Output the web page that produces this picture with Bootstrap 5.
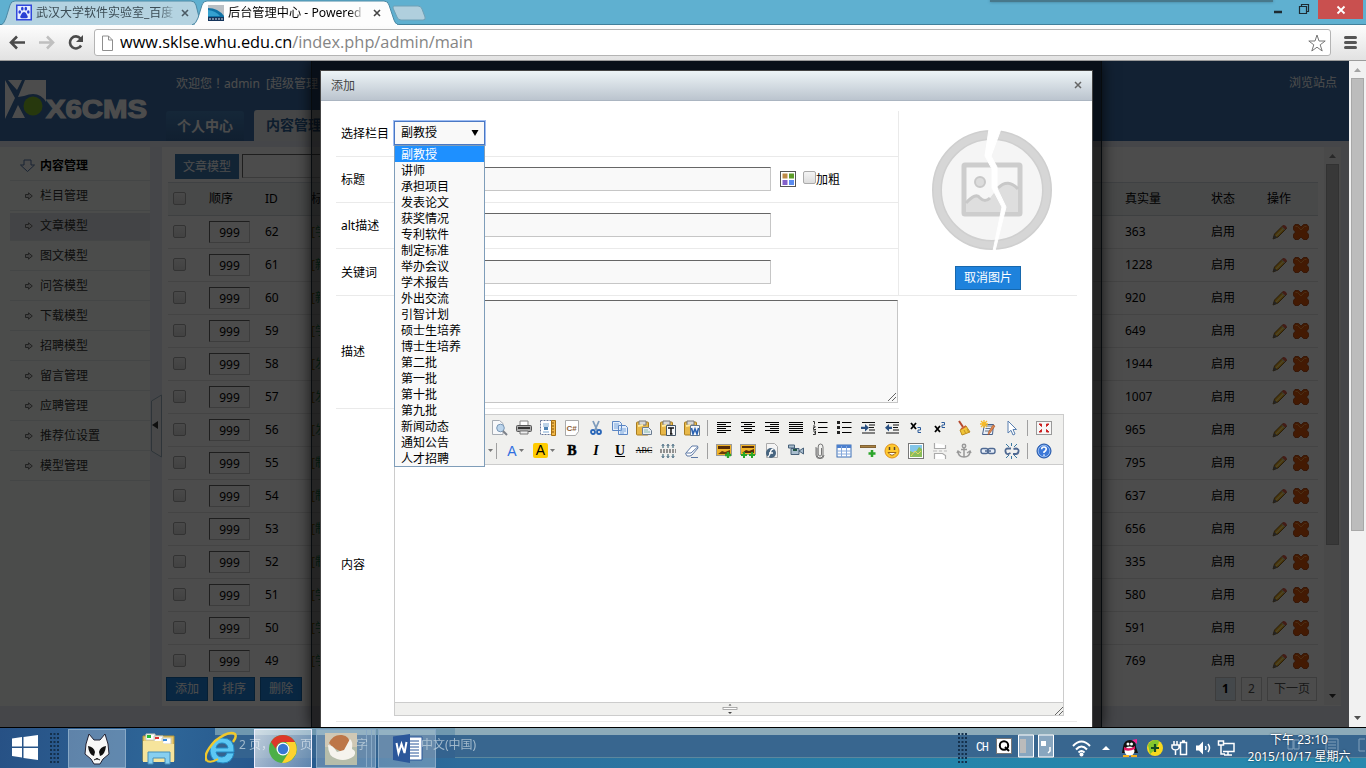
<!DOCTYPE html>
<html lang="zh-CN">
<head>
<meta charset="utf-8">
<title>后台管理中心 - Powered by X6CMS</title>
<link href="https://cdn.jsdelivr.net/npm/bootstrap@5.3.0/dist/css/bootstrap.min.css" rel="stylesheet">
<style>
html,body{width:1366px;height:768px;overflow:hidden}
body{font:12px/16px "Noto Sans","Noto Sans CJK SC",sans-serif;color:#000;background:#fff}
svg{display:block;flex:none}
/* browser chrome */
.tabstrip{height:25px;background:#5fb0d0;border-bottom:1px solid #41809b;position:relative}
.tabstrip>svg{position:absolute;left:0;top:0}
.tabtext{height:25px;font-size:12px}
.tabtext span{overflow:hidden;white-space:nowrap;line-height:26px}
.fade-end{-webkit-mask-image:linear-gradient(90deg,#000 88%,transparent)}
.winshadow{left:990px;top:0;width:283px;height:2px;background:#47788b;box-shadow:0 0 3px #3c7289}
.closebox{width:45px;height:19px;background:#c9504f;margin-right:3px}
.addressbar{height:36px;background:linear-gradient(#fdfdfd,#e2e2e2);border-bottom:1px solid #9b9b9b}
.omnibox{width:1237px;height:27px;background:#fff;border:1px solid #b4b4b4;border-radius:3px;margin-top:4px}
.url{font:16px/24px "Open Sans","Noto Sans",sans-serif;white-space:nowrap}
/* page */
.viewport{height:666px;overflow:hidden;position:relative}
.page{width:1349px;background:#e6ecf3}
.scrollcol{width:17px;background:#f1f1f1}
.thumb{width:13px;background:#bcbcbc;border:1px solid #a8a8a8}
.tophead{height:80px;background:#3c70aa;color:#fff}
.navtab{height:30px;width:78px;background:linear-gradient(#4783bd,#3768a0);border-radius:3px 3px 0 0;font:bold 14px/28px "Noto Sans CJK SC",sans-serif}
.navtab.on{height:31px;background:#e9edf1;color:#2c6296;width:80px}
.sidebar{width:150px;height:559px;background:#fafffa;padding-left:10px}
.sidebar div{height:30px;border-bottom:1px solid #e4eaea;padding-left:10px;color:#333}
.sidebar .sel{background:linear-gradient(#fafffa 2px,#e2e4ea 2px)}
.mainpane{width:1179px;height:559px;background:#fff}
.blue{background:#1e82dc;border:1px solid #1768ad;color:#fff;height:24px;line-height:22px;width:42px;text-align:center}
.modelbtn{width:64px;height:25px;line-height:23px;background:#3d78b0;border-color:#3d78b0}
.tinput{border:1px solid;border-color:#666 #c6c6c6 #c6c6c6 #666;background:#f9f9f9}
.g-row{height:33px;border-bottom:1px solid #e5e5e5;width:1150px;margin-left:6px}
.g-row>*{flex:none}
.g-head{height:34px;background:#f0f4f6;border-top:1px solid #d4dbe0;border-bottom:1px solid #d0d5da}
.g-check{width:36px;padding-left:5px}
.g-check .cbx{margin-top:-2px}
.g-ord{width:56px;padding-left:5px}
.g-id{width:51px;padding-left:5px}
.g-title{width:814px;color:#2a6}
.g-real{width:86px}.g-stat{width:56px}
.numbox{width:41px;height:22px;border:1px solid;border-color:#666 #ccc #ccc #666;text-align:center;line-height:21px}
.cbx{width:13px;height:13px;border:1px solid #aaa;border-radius:2px;background:linear-gradient(#f4f4f4,#ddd);flex:none}
.pg{height:24px;border:1px solid #ccc;line-height:22px;text-align:center;color:#555}
.shade{inset:0 17px 0 0;background:rgba(0,0,0,.7)}
.frame{left:311px;top:0;width:791px;height:667px;background:rgba(0,0,0,.52);border:1px solid #070b0e;border-top:0;box-shadow:0 0 14px rgba(0,0,0,.75);padding:9px 8px 0 8px}
.dlg{width:773px;height:660px;background:#fff;border:1px solid #444;border-bottom:0}
.dlg-title{height:30px;background:linear-gradient(#edf4f7,#bbc4ce);border-bottom:1px solid #abb5c1;color:#444;padding:0 10px}
.f-row{border-bottom:1px solid #eaeaea}
.f-lab{width:58px;padding-left:5px;flex:none}
.f-left{width:563px;border-right:1px solid #eaeaea}
.f-left .tinput{margin-top:-2px}
.pick{width:91px;height:24px;border:1px solid #4a78c4;box-shadow:0 0 0 1px #9fbdf3;background:#f9f9f9;padding:0 5px 0 6px}
.options{left:394px;top:84px;width:91px;height:322px;border:1px solid #7f9db9;background:#f9f9f9}
.options div{height:16px;line-height:17px;padding-left:6px;white-space:nowrap}
.options div:first-child{background:#1e90ff;color:#fff}
.editor{width:670px;height:302px;border:1px solid #ccc}
.ebar{height:50px;background:#f0f0ee;border-bottom:1px solid #ccc;padding:1px 0 0 93px}
.ebar .d-flex{height:23px}
.ico{width:24px;display:flex;justify-content:center}
.sep{width:1px;height:16px;margin:0 4px 0 3px;background:#a0a0a0}
.efoot{height:13px;background:#f0f0ee;border-top:1px solid #ccc}
/* taskbar */
.taskbar{height:41px;border-top:1px solid #000;position:relative;overflow:hidden;background:linear-gradient(100deg,#275185,#2e6698 12%,#26568b 20%,#2d6c9b 34%,#2584aa 70%,#2889ae)}
.ghostwin{left:215px;top:0;width:1151px;height:30px;background:linear-gradient(#8dabb9 7px,#38668f 7px);border-bottom:1px solid #5c879e}
.ghost1{background:linear-gradient(#6f98af 7px,#34638f 7px);width:240px;left:215px;top:0;height:30px}
.tb{height:39px;margin-top:1px;border:1px solid #88a9c6;background:rgba(255,255,255,.25);width:58px}
.tb.on{border:1px solid #eef;background:linear-gradient(120deg,rgba(255,255,255,.68),rgba(230,240,255,.28))}
.gh{color:#c5d5df;opacity:.75;font-size:12px;top:9px}
.clock{font-size:12px;line-height:17px;color:#fff;text-shadow:0 0 2px #123;text-align:center;white-space:nowrap}
</style>
</head>
<body class="d-flex flex-column">
<svg width="0" height="0" style="position:absolute">
<symbol id="pencil" viewBox="0 0 16 16"><path d="M1 15l1.500-5L11 1.500l3.500 3L6 13z" fill="#f2b01e" stroke="#7b5a20" stroke-width=".9"/><path d="M4 12l8-8" stroke="#ffe682" stroke-width="1.300"/><path d="M1 15l1.200-4 3 2.500z" fill="#777"/><path d="M10 2.500l1.500-1.500q2-.5 3.500 2.500l-1.500 2z" fill="#e2604e"/><path d="M9.500 3l3.500 3" stroke="#bbb"/></symbol>
<symbol id="cross" viewBox="0 0 16 16"><path d="M2 .5h3.500L8 3 10.500.5H14L15.700 3v2.500L13.500 8l2.200 2.500V13L14 15.500h-3.500L8 13l-2.500 2.500H2L.3 13v-2.500L2.500 8 .3 5.500V3z" fill="#e2590c" stroke="#a83a00" stroke-width=".8"/><path d="M2.500 2.500h2L8 6l3.500-3.500h2" stroke="#f89a48" fill="none"/></symbol>
<symbol id="arr" viewBox="0 0 8 8"><path d="M.5 2.500h3V.8L7.300 4 3.500 7.200V5.500h-3z" fill="#ddd" stroke="#666" stroke-width=".9"/></symbol>
<symbol id="e-preview" viewBox="0 0 16 16"><path d="M.5.5h7l3.500 3v11H.5z" fill="#f7f8fa" stroke="#a6acb4"/><circle cx="8.500" cy="8" r="3.800" fill="#bcd5ec" stroke="#7896b4"/><path d="M11 11l4 4" stroke="#7c8189" stroke-width="2"/></symbol>
<symbol id="e-print" viewBox="0 0 16 16"><path d="M4 1h8v5H4z" fill="#fff" stroke="#888"/><rect x=".5" y="5.500" width="15" height="6" rx="1" fill="#aaa" stroke="#555"/><path d="M2 8h12" stroke="#333" stroke-width="2"/><path d="M4 11h8v3H4z" fill="#eee" stroke="#777"/></symbol>
<symbol id="e-tpl" viewBox="0 0 16 16"><path d="M.5.5h11v14H.5z" fill="#fff" stroke="#679" stroke-dasharray="2 1"/><path d="M3 4h6M3 6h6M3 12h6" stroke="#7aa6d0"/><path d="M4 7h4v3H4z" fill="#4e83b5"/><path d="M11.500 .5h4v15h-4z" fill="#f0b849" stroke="#a87010"/><path d="M12 3h2M12 6h2M12 9h2M12 12h2" stroke="#85500c"/></symbol>
<symbol id="e-code" viewBox="0 0 16 16"><path d="M1.500.5h13v11l-3 4h-10z" fill="#fff" stroke="#aaa"/><text x="2.500" y="10.500" font-size="8" font-weight="bold" font-family="Liberation Sans" fill="#8b5b35">C#</text></symbol>
<symbol id="e-cut" viewBox="0 0 16 16"><path d="M5 1l4 9M11 1L7 10" stroke="#7e9cbc" stroke-width="1.800"/><circle cx="5" cy="12" r="2" fill="none" stroke="#2966b8" stroke-width="1.800"/><circle cx="11" cy="12" r="2" fill="none" stroke="#2966b8" stroke-width="1.800"/></symbol>
<symbol id="e-copy" viewBox="0 0 16 16"><path d="M.5 1.500h7l2 2v7h-9zM6.500 5.500h7l2 2v7h-9z" fill="#e4eefb" stroke="#5b86c4"/><path d="M2 4h5M2 6h4M2 8h4M8 9h6M8 11h6M8 13h4" stroke="#7ba6dc"/></symbol>
<symbol id="e-clip" viewBox="0 0 16 16"><rect x=".5" y="2" width="12" height="13" rx="1" fill="#e8b849" stroke="#a87c1e"/><path d="M3 1h7v4H3z" fill="#d8d8d8" stroke="#777"/><path d="M2 6l5-1" stroke="#ffeaa0" stroke-width="2"/></symbol>
<symbol id="e-paste" viewBox="0 0 16 16"><use href="#e-clip"/><path d="M6.500 7.500h6l3 3v4h-9z" fill="#e7edf4" stroke="#6b7c90"/><path d="M8 10h4M8 12h6" stroke="#8ba"/></symbol>
<symbol id="e-pastet" viewBox="0 0 16 16"><use href="#e-clip"/><path d="M6.500 5.500h9v10h-9z" fill="#f4f7fa" stroke="#456"/><path d="M8 8h6M11 8v6M10 14h2.500" stroke="#111" stroke-width="1.500"/></symbol>
<symbol id="e-pastew" viewBox="0 0 16 16"><use href="#e-clip"/><path d="M6.500 5.500h9v10h-9z" fill="#f4f7fa" stroke="#678"/><path d="M7.500 8l1.500 6 2-5 2 5L14.500 8" stroke="#2a62b2" stroke-width="1.600" fill="none"/></symbol>
<symbol id="e-left" viewBox="0 0 16 16"><path d="M1 2.500h14M1 4.500h9M1 6.500h14M1 8.500h9M1 10.500h14M1 12.500h9" stroke="#000"/></symbol>
<symbol id="e-center" viewBox="0 0 16 16"><path d="M1 2.500h14M4 4.500h8M1 6.500h14M4 8.500h8M1 10.500h14M4 12.500h8" stroke="#000"/></symbol>
<symbol id="e-right" viewBox="0 0 16 16"><path d="M1 2.500h14M6 4.500h9M1 6.500h14M6 8.500h9M1 10.500h14M6 12.500h9" stroke="#000"/></symbol>
<symbol id="e-full" viewBox="0 0 16 16"><path d="M1 2.500h14M1 4.500h14M1 6.500h14M1 8.500h14M1 10.500h14M1 12.500h14" stroke="#000"/></symbol>
<symbol id="e-ol" viewBox="0 0 16 16"><path d="M6 2.500h9.500M6 7.500h9.500M6 12.500h9.500" stroke="#000"/><path d="M1 1.500h1.500v3M1 6h2v1.500H1.500v2h2.500M1 11h2.500v3.500H1M2 12.800h1.500" fill="none" stroke="#333"/></symbol>
<symbol id="e-ul" viewBox="0 0 16 16"><path d="M6 2.500h9.500M6 7.500h9.500M6 12.500h9.500" stroke="#000"/><path d="M1 1h3v3H1zM1 6h3v3H1zM1 11h3v3H1z" fill="#222"/></symbol>
<symbol id="e-ind" viewBox="0 0 16 16"><path d="M2 2.500h13M9 5h6M9 7.500h5M9 10h6M2 13h13" stroke="#111" stroke-width="1.200"/><path d="M1 6.700h4V4l4 3.700-4 3.800V9H1z" fill="#2a5081"/></symbol>
<symbol id="e-out" viewBox="0 0 16 16"><path d="M2 2.500h13M9 5h6M9 7.500h5M9 10h6M2 13h13" stroke="#111" stroke-width="1.200"/><path d="M8 6.700H5V4L1 7.700l4 3.800V9h3z" fill="#2a5081"/></symbol>
<symbol id="e-sub" viewBox="0 0 16 16"><path d="M3 3l5 6M8 3l-5 6" stroke="#000" stroke-width="1.800"/><path d="M9.500 7.500h3v2.500h-2.500v2.500h3" fill="none" stroke="#2a5a9a"/></symbol>
<symbol id="e-sup" viewBox="0 0 16 16"><path d="M3 6l5 6M8 6l-5 6" stroke="#000" stroke-width="1.800"/><path d="M9.500 2.500h3V5h-2.500v2.500h3" fill="none" stroke="#2a5a9a"/></symbol>
<symbol id="e-broom" viewBox="0 0 16 16"><path d="M3 1l4 6" stroke="#b5482e" stroke-width="2"/><path d="M4 10l6-4 4 6-8 3z" fill="#f0c538" stroke="#bd8b1d"/><path d="M5 9l5-3" stroke="#c63" stroke-width="1.500"/><path d="M8 10l2 4M11 9l1.500 3" stroke="#c59428"/></symbol>
<symbol id="e-wand" viewBox="0 0 16 16"><path d="M4.500 4.500h9l-1 10h-10z" fill="#e8eff8" stroke="#47618a"/><path d="M6 6h6M5.500 8.500h5M5 11h5" stroke="#678"/><path d="M4 0v8M0 4h8M1 1l6 6M7 1L1 7" stroke="#f5ba28" stroke-width="1.300"/><path d="M15 6l-5 7-2 2 .5-3L13 5z" fill="#e2894c" stroke="#a34e25" stroke-width=".6"/></symbol>
<symbol id="e-select" viewBox="0 0 16 16"><path d="M4 1l8.500 8.500H9l2 4.500-2 1-2-4.700L4 13z" fill="#fff" stroke="#587fb0"/></symbol>
<symbol id="e-fs" viewBox="0 0 16 16"><rect x=".5" y="1.500" width="15" height="13" fill="#f7f7f7" stroke="#999"/><path d="M3 4h2.500v2.500zM13 4h-2.500v2.500zM3 12h2.500V9.500zM13 12h-2.500V9.500z" fill="#c22" stroke="#c22"/></symbol>
<symbol id="e-lh" viewBox="0 0 16 16"><path d="M0 7h16M0 9h16" stroke="#333" stroke-dasharray="2 1"/><path d="M3 5V1M8 5V1M13 5V1M3 11v4M8 11v4M13 11v4" stroke="#256"/><path d="M1.500 3L3 1.500 4.500 3M6.500 3L8 1.500 9.500 3M11.500 3L13 1.500 14.500 3M1.500 13L3 14.500 4.500 13M6.500 13L8 14.500 9.500 13M11.500 13l1.500 1.500 1.500-1.500" fill="none" stroke="#357" stroke-width=".7"/></symbol>
<symbol id="e-eraser" viewBox="0 0 16 16"><path d="M1.500 10.500L8 3h5.500l.5 2-6 7-2 1h-3z" fill="#fff" stroke="#5d79a5"/><path d="M2 10h5l6.500-6M7 14.500h7" stroke="#5d79a5" fill="none"/></symbol>
<symbol id="e-img" viewBox="0 0 16 16"><rect x=".5" y="1.500" width="15" height="11" fill="#f0b328" stroke="#999"/><path d="M2 3h12v3H2z" fill="#542c08"/><path d="M2 11l4-3 3 1 5-2v4z" fill="#693b09"/><path d="M12 9v6M9 12h6" stroke="#29a628" stroke-width="2.300"/></symbol>
<symbol id="e-imgs" viewBox="0 0 16 16"><rect x=".5" y="1.500" width="15" height="10" fill="#f0b328" stroke="#999"/><path d="M2 3h12v2H2zM2 10l4-3 3 1 5-2v4z" fill="#542c08"/><path d="M4 9v6M1 12h6M12 9v6M9 12h6" stroke="#29a628" stroke-width="2"/></symbol>
<symbol id="e-flash" viewBox="0 0 16 16"><path d="M2.500.5h8l3 3v11h-11z" fill="#f4f4f4" stroke="#aaa"/><circle cx="7" cy="10" r="5" fill="#476580"/><path d="M9.500 6Q7 6 6.500 9T4 14M5 10h4" stroke="#fff" fill="none" stroke-width="1.300"/></symbol>
<symbol id="e-video" viewBox="0 0 16 16"><path d="M.5 2h6v3h-6zM3 5.500h8v6H3zM11 8l4.500-3v6z" fill="#a9bdce" stroke="#476078"/><path d="M5 7h4" stroke="#254" stroke-width="2"/></symbol>
<symbol id="e-attach" viewBox="0 0 16 16"><path d="M5 5v7q0 3 3 3t3-3V4q0-3-2.500-3T6.200 4v7q0 2 1.800 2t1.500-2V5M4 4v8q0 3.700 4 3.700t4-3.700" fill="none" stroke="#777"/></symbol>
<symbol id="e-table" viewBox="0 0 16 16"><rect x="1" y="2" width="14" height="12" fill="#fff" stroke="#3d6eb4"/><path d="M1 3.500h14" stroke="#4b7fce" stroke-width="3"/><path d="M1 8h14M1 11h14M5.500 3v11M10.500 3v11" stroke="#86a9dc"/></symbol>
<symbol id="e-hr" viewBox="0 0 16 16"><path d="M0 2.500h16v2H0z" fill="#a88142" stroke="#6f4c1c" stroke-width=".8"/><path d="M12 7v7M8.500 10.500h7" stroke="#2ca52b" stroke-width="2.500"/></symbol>
<symbol id="e-smile" viewBox="0 0 16 16"><circle cx="8" cy="8" r="7" fill="#ffc92e" stroke="#de901b"/><path d="M5.500 4v3M10.500 4v3" stroke="#543" stroke-width="1.500"/><path d="M4 9.500h8Q8 15 4 9.500" fill="#fff" stroke="#9b6417"/></symbol>
<symbol id="e-map" viewBox="0 0 16 16"><rect x=".5" y=".5" width="15" height="15" fill="#fff" stroke="#777"/><path d="M2 2h12v12H2z" fill="#84c6e9"/><path d="M2 8l5 2 4-6 3 2v8H2z" fill="#8abd5b"/><path d="M3 13l4-5 3 3 3-3" stroke="#e9d460" fill="none"/></symbol>
<symbol id="e-pb" viewBox="0 0 16 16"><path d="M2.500 0v5.500h11V2M2.500 16v-5.500h8l3 2V16" fill="#fff" stroke="#aaa" stroke-width="1.200"/><path d="M1 8h4m2 0h3m2 0h3" stroke="#bbb"/></symbol>
<symbol id="e-anchor" viewBox="0 0 16 16"><circle cx="8" cy="3" r="1.700" fill="none" stroke="#999" stroke-width="1.500"/><path d="M8 5v9M5 6.500h6M2 8q0 6 6 6t6-6M1 10l1-2 3 2M15 10l-1-2-3 2" fill="none" stroke="#999" stroke-width="1.500"/></symbol>
<symbol id="e-link" viewBox="0 0 16 16"><rect x="1" y="5.500" width="7" height="5" rx="2" fill="#e5edf8" stroke="#4f6992" stroke-width="1.400"/><rect x="8" y="5.500" width="7" height="5" rx="2" fill="#e5edf8" stroke="#4f6992" stroke-width="1.400"/><path d="M5 8h6" stroke="#4f6992" stroke-width="1.500"/></symbol>
<symbol id="e-unlink" viewBox="0 0 16 16"><path d="M7 5.500H4q-3 0-2.500 3t3 2.500l2-1M9.500 6L12 5.500q3 .5 2.500 3T12 11H9" fill="none" stroke="#4f6992" stroke-width="1.800"/><path d="M2 1l3 3M7.500 0v3M13 1l-3 3M2 15l3-3M7.500 16v-3M13 15l-3-3" stroke="#3a78a2"/></symbol>
<symbol id="e-help" viewBox="0 0 16 16"><circle cx="8" cy="8" r="7" fill="#3c78d8" stroke="#2153a4"/><circle cx="8" cy="8" r="5.800" fill="none" stroke="#a9c9f5" stroke-width=".8"/><path d="M5.700 6.200Q5.800 3.800 8.200 4q2.300.3 2 2.300Q10 7.700 8 9v1M8 11.500v1.200" stroke="#fff" stroke-width="1.600" fill="none"/></symbol>
</svg>

<!-- tab strip -->
<div class="tabstrip d-flex">
  <svg width="430" height="25"><path d="M1 25Q4 24 6 18L10 5q1-4 5-4h176q4 0 5 4l5 20" fill="#b4d3e1" stroke="#4b89a5"/><path d="M394 6h24q3 0 4 3l3 8q1 3-2 3h-22q-3 0-4-3l-4-9q0-2 1-2z" fill="#b0cfdd" stroke="#6fa0b6"/><path d="M192 25q4-1 6-7l4-13q1-4 5-4h177q4 0 5 4l5 15q1 4 5 5z" fill="#fdfdfd" stroke="#4b89a5"/><path d="M195 25h202" stroke="#fdfdfd" stroke-width="2"/></svg>
  <div class="tabtext d-flex position-relative w-100">
    <svg class="ms-3 mt-1" width="16" height="17" viewBox="0 0 16 17"><rect width="16" height="16" y=".5" fill="#3148dc"/><path d="M1.500 2h13v13h-13z" fill="#e7edff"/><g fill="#2a40d4"><ellipse cx="3.700" cy="8" rx="1.300" ry="1.800"/><ellipse cx="6.300" cy="4.700" rx="1.300" ry="1.900"/><ellipse cx="9.800" cy="4.700" rx="1.300" ry="1.900"/><ellipse cx="12.300" cy="8" rx="1.300" ry="1.800"/><path d="M8 8q2 0 3 3 2 3-1 3.300H6Q3 14 5 11q1-3 3-3"/></g></svg>
    <span class="fade-end" style="width:140px;margin-left:4px;color:#3c4d56">武汉大学软件实验室_百度</span>
    <svg style="margin:8px 0 0 4px" width="10" height="10"><path d="M2 2l6 6M8 2l-6 6" stroke="#4a5a64" stroke-width="1.600"/></svg>
    <svg style="margin:5px 4px 0 18px" width="16" height="16"><rect width="16" height="16" fill="#b9bfc4"/><path d="M0 3q10 0 16 8v2H0z" fill="#0f73a6"/><path d="M0 5q8 1 12 6L0 11z" fill="#35a1cf"/><path d="M0 12h16v4H0z" fill="#15345b"/><path d="M1 14h14" stroke="#d8e4ef" stroke-dasharray="2 1"/></svg>
    <span class="fade-end" style="width:137px;font-size:12.200px">后台管理中心 - Powered</span>
    <svg style="margin:8px 0 0 7px" width="10" height="10"><path d="M2 2l6 6M8 2l-6 6" stroke="#444" stroke-width="1.600"/></svg>
    <svg class="ms-auto" width="90" height="25"><path d="M46 12h8" stroke="#1d2b32" stroke-width="2.500"/><path d="M71.500 6.500h7v7h-7zM73.500 6V4.500h7v7H79" fill="none" stroke="#1d2b32" stroke-width="1.200"/></svg>
    <div class="closebox d-flex justify-content-center align-items-center"><svg width="10" height="10"><path d="M1.500 1.500l7 7M8.500 1.500l-7 7" stroke="#fff" stroke-width="1.800"/></svg></div>
  </div>
  <div class="winshadow position-absolute"></div>
</div>
<div class="addressbar d-flex">
  <svg width="94" height="35"><g fill="none" stroke-width="2.600"><path d="M25 17.500H12M17 11.500l-6 6 6 6" stroke="#4b4b4b"/><path d="M39 17.500h13M47 11.500l6 6-6 6" stroke="#bfbfbf"/><path d="M80.500 13.500a6 6 0 1 0 .6 7" stroke="#4b4b4b"/></g><path d="M83 10v7h-7z" fill="#4b4b4b"/></svg>
  <div class="omnibox d-flex align-items-center">
    <svg style="margin:0 7px" width="11" height="16"><path d="M.5 1h6l4 4v10.500H.5zM6.500 1v4h4" fill="#fff" stroke="#8e8e8e"/></svg>
    <svg width="356" height="26" class="url"><text x="0" y="18" textLength="353" lengthAdjust="spacingAndGlyphs">www.sklse.whu.edu.cn<tspan fill="#858585">/index.php/admin/main</tspan></text></svg>
    <svg class="ms-auto me-1" width="18" height="18" viewBox="0 0 18 18"><path d="M9 1l2 6h6.200l-5 3.800 2 6.200L9 13.200 3.800 17l2-6.200-5-3.800H7z" fill="#fff" stroke="#777"/></svg>
  </div>
  <svg width="35" height="35"><path d="M14.500 12.500h10M14.500 17.500h10M14.500 22.500h10" stroke="#555" stroke-width="3" stroke-linecap="round"/></svg>
</div>

<div class="viewport d-flex">
  <div class="page">
    <div class="tophead d-flex">
      <svg width="166" height="80"><g fill="#fff"><path d="M5 19l10 18L5 58zM8 19h14l-5 10zM12 57l6-13 7 13zM25 19h21v22Q39 29 24 35l-6 1z"/><text x="46" y="56.500" font-family="Liberation Sans" font-weight="bold" font-size="25.500" stroke="#fff" stroke-width="1.200" textLength="101" lengthAdjust="spacingAndGlyphs">X6CMS</text></g><circle cx="33" cy="45" r="9.500" fill="#84bd2e"/></svg>
      <div class="flex-grow-1 d-flex flex-column justify-content-between">
        <div class="d-flex justify-content-between" style="padding:14px 12px 0 10px"><span>欢迎您<span lang="zh-TW" style="font-family:'Noto Sans CJK TC',sans-serif">！</span>admin&nbsp; [超级管理</span><span>浏览站点</span></div>
        <div class="d-flex align-items-end" style="gap:10px"><div class="navtab text-center">个人中心</div><div class="navtab on text-center">内容管理</div></div>
      </div>
    </div>
    <div class="d-flex" style="padding-top:6px">
      <div class="sidebar" id="side"></div>
      <svg width="12" height="559"><path d="M11.500 248v62l-10-6v-50z" fill="#f0f2f4" stroke="#9bb0bf"/><path d="M8 274v8l-6-4z" fill="#333"/></svg>
      <div class="mainpane d-flex">
        <div>
          <div class="d-flex" style="height:35px;padding:7px 0 0 13px;gap:3px"><div class="blue modelbtn">文章模型</div><div class="tinput" style="width:300px;height:24px;background:#fff"></div></div>
          <div style="height:490px;overflow:hidden" id="grid">
            <div class="g-row g-head d-flex align-items-center"><div class="g-check"><div class="cbx"></div></div><div class="g-ord">顺序</div><div class="g-id">ID</div><div class="g-title" style="color:#222">标题</div><div class="g-real">真实量</div><div class="g-stat">状态</div><div>操作</div></div>
          </div>
          <div class="d-flex justify-content-between" style="padding:5px 7px 0 4px;width:1162px">
            <div class="d-flex" style="gap:5px"><div class="blue">添加</div><div class="blue">排序</div><div class="blue">删除</div></div>
            <div class="d-flex" style="gap:5px"><div class="pg fw-bold" style="width:21px;background:#e4f0fa;color:#000">1</div><div class="pg" style="width:21px">2</div><div class="pg" style="width:50px">下一页</div></div>
          </div>
        </div>
        <div class="d-flex flex-column align-items-center" style="width:17px;height:558px;background:#f4f4f4"><svg width="17" height="17"><path d="M5 11l3.500-4 3.500 4z" fill="#888"/></svg><div class="thumb" style="height:381px"></div><svg class="mt-auto" width="17" height="17"><path d="M5 6l3.500 4L12 6z" fill="#333"/></svg></div>
      </div>
    </div>
  </div>
  <div class="scrollcol d-flex flex-column align-items-center"><svg width="17" height="17"><path d="M5 11l3.500-4 3.500 4z" fill="#a3a3a3"/></svg><div class="thumb" style="height:453px"></div><svg class="mt-auto" width="17" height="17"><path d="M5 6l3.500 4L12 6z" fill="#505050"/></svg></div>
  <div class="shade position-absolute"></div>
  <div class="frame position-absolute">
    <div class="dlg">
      <div class="dlg-title d-flex justify-content-between align-items-center"><span>添加</span><svg width="8" height="8" style="margin-top:-2px"><path d="M1 1l6 6M7 1L1 7" stroke="#666" stroke-width="1.500"/></svg></div>
      <div style="padding:10px 15px 0">
        <div class="d-flex f-row" style="height:185px">
          <div class="f-left">
            <div class="f-row d-flex align-items-center" style="height:46px"><div class="f-lab">选择栏目</div><div class="pick d-flex align-items-center justify-content-between" style="margin-top:-1px"><span>副教授</span><svg width="8" height="8"><path d="M.5 1h7L4 7z"/></svg></div></div>
            <div class="f-row d-flex align-items-center" style="height:46px"><div class="f-lab">标题</div><div class="tinput" style="width:377px;height:24px"></div><svg style="margin:-2px 7px 0 9px" width="16" height="16"><rect x=".5" y=".5" width="15" height="15" fill="#fff" stroke="#555"/><path d="M2.500 2.500h5v5h-5z" fill="#be8a45"/><path d="M9 2.500h5v5H9z" fill="#5d9d28"/><path d="M2.500 9h5v5h-5z" fill="#8360ca"/><path d="M9 9h5v5H9z" fill="#5a8bf0"/></svg><div class="cbx" style="margin-top:-5px"></div><span>加粗</span></div>
            <div class="f-row d-flex align-items-center" style="height:46px"><div class="f-lab">alt描述</div><div class="tinput" style="width:377px;height:24px"></div></div>
            <div class="d-flex align-items-center" style="height:47px"><div class="f-lab">关键词</div><div class="tinput" style="width:377px;height:24px"></div></div>
          </div>
          <div class="flex-grow-1 d-flex flex-column align-items-center" style="padding:18px 0 0 0">
            <svg width="122" height="124" viewBox="0 0 122 124" style="margin-left:8px"><circle cx="61" cy="61" r="55" fill="#f5f5f5" stroke="#cfcfcf" stroke-width="10"/><circle cx="61" cy="61" r="55" fill="none" stroke="#d6d6d6" stroke-width="7"/><rect x="33" y="36" width="56" height="49" rx="1" fill="#f6f6f6" stroke="#cdcdcd" stroke-width="5"/><circle cx="49" cy="53" r="5" fill="#dcdcdc" stroke="#c8c8c8" stroke-width="2"/><path d="M35 75l10-9 6 5q4 4 8-2 6-8 11-12 9-7 17 3v23H35z" fill="#dedede"/><path d="M35 74q10-11 14-5 5 5 10 0M67 59q10-10 20 1" fill="none" stroke="#c8c8c8" stroke-width="3"/><path d="M58 0L54 27l7 13 0 19 10 19-9 44h2l11-44-9-19 0-21-6-11L70 0z" fill="#fff" stroke="#fff"/></svg>
            <div class="blue" style="width:66px;margin-top:13px">取消图片</div>
          </div>
        </div>
        <div class="f-row d-flex align-items-center" style="height:113px;width:563px"><div class="f-lab">描述</div><div class="tinput d-flex justify-content-end align-items-end" style="width:504px;height:103px;margin-top:-1px"><svg width="10" height="10"><path d="M1 9l8-8M5 9l4-4" stroke="#555" stroke-width=".9"/></svg></div></div>
        <div class="f-row d-flex align-items-center" style="height:313px"><div class="f-lab">内容</div>
          <div class="editor d-flex flex-column"><div class="ebar"><div class="d-flex align-items-center" id="bar1"></div><div class="d-flex align-items-center" id="bar2"></div></div><div class="flex-grow-1"></div>
            <div class="efoot d-flex"><svg class="mx-auto" style="padding-left:0;transform:translateX(5px)" width="16" height="12"><path d="M6.500 2.500L8 1l1.500 1.500zM6 9l2 2 2-2z" fill="#444"/><rect x="1" y="4.500" width="14" height="2" fill="#fff" stroke="#999" stroke-width=".8"/></svg><svg class="mt-auto" width="9" height="9"><path d="M1 9l8-8M5 9l4-4" stroke="#555" stroke-width=".9"/></svg></div>
          </div>
        </div>
      </div>
    </div>
  </div>
  <div class="options position-absolute" id="opts"></div>
</div>

<div class="taskbar d-flex flex-grow-1">
  <div class="ghostwin position-absolute"></div><div class="ghost1 position-absolute"></div>
  <span class="gh position-absolute" style="left:239px">2 页，</span><span class="gh position-absolute" style="left:300px">页</span>
  <div class="d-flex position-relative w-100">
    <svg width="68" height="40"><path d="M12 10.500l10-1.500v9.500H12zM23.500 9L38 7v11.500H23.500zM12 20h10v9.500L12 28zM23.500 20H38v12l-14.500-2z" fill="#fff"/><path d="M51 5v30M54.500 5v30M58 5v30" stroke="#14304c" stroke-width="2" stroke-dasharray="2 2"/></svg>
    <div class="tb d-flex justify-content-center align-items-center"><svg width="26" height="32"><path d="M5 1l5 6h6l5-6 3 10 1 10-6 5-3 5h-6l-3-5-6-5L2 11z" fill="#f7f7f7" stroke="#223"/><path d="M4 13q6 1 7 6l-1 4q-5-1-6-10zM22 13q-6 1-7 6l1 4q5-1 6-10z" fill="#111"/><path d="M10 27q3-3 6 0M13 25v2" stroke="#111" fill="none"/></svg></div>
    <svg style="margin:5px 0 0 16px" width="34" height="32"><path d="M1 3h31v25H1z" fill="#e7c96d" stroke="#b49539"/><path d="M4 1h9v6H4zM12 3h9v6h-9zM20 5h9v6h-9z" fill="#fff" stroke="#ccb"/><path d="M5 2h4v3H5z" fill="#2b3"/><path d="M13 4h4v2h-4z" fill="#d33"/><path d="M21 6h4v2h-4z" fill="#38d"/><path d="M1 8h19l2 3h10v18H1z" fill="#f6e49c"/><path d="M6 31V19h22v12h-5v-6H11v6z" fill="#87cff0" stroke="#478fb8"/></svg>
    <svg style="margin:3px 0 0 29px" width="34" height="34"><path d="M29 22h-7q-1 4-5 4-5 0-6-5h18q1-14-12-14Q5 8 5 20q1 12 13 12 9 0 11-10zM11 17q1-5 6-5t6 5z" fill="#5cc8f4" stroke="#238bc5"/><path d="M2 30Q-3 24 10 10 24-1 30 3q2 3-2 8" fill="none" stroke="#f0c82c" stroke-width="2.500"/><path d="M2 30q5 2 11-2" fill="none" stroke="#f0c82c" stroke-width="2"/></svg>
    <div class="tb on d-flex justify-content-center align-items-center" style="margin-left:15px"><svg width="28" height="28" viewBox="0 0 28 28"><circle cx="14" cy="14" r="14" fill="#4caf46"/><path d="M2 7Q6 0 14 0t12 7H14q-6 0-7 7z" fill="#dd3829"/><path d="M26 7q4 9-1 15-4 6-12 6l7-11q2-5-3-10z" fill="#fdd22f"/><circle cx="14" cy="14" r="6.500" fill="#fff"/><circle cx="14" cy="14" r="5.200" fill="#3778d3"/></svg></div>
    <div class="tb d-flex align-items-center" style="margin-left:4px;width:51px;padding-left:8px"><svg width="32" height="32"><path d="M0 0h32v32H0z" fill="#b6bdaa"/><path d="M0 0h32v14H0z" fill="#d0c8b4"/><path d="M4 10Q8 1 17 2q8 1 8 10l-4 8Q9 17 4 10" fill="#bd7648"/><path d="M3 12q5 0 9 7l7-2 6-11q3 2 2 10 5 2 2 7-8 6-17 3Q3 24 3 12" fill="#f5f3ed"/></svg></div>
    <div class="tb" style="width:5px;border-left:0"></div><div class="tb" style="width:4px;border-left:0"></div>
    <div class="tb d-flex justify-content-center align-items-center" style="margin-left:2px"><svg width="31" height="31"><path d="M14 4h16v23H14z" fill="#fff" stroke="#2b579a"/><path d="M18 8h9M18 11h9M18 14h9M18 17h9M18 20h9M18 23h9" stroke="#2b579a"/><path d="M1 3.500L18 1v29L1 27z" fill="#2b579a"/><path d="M4.500 10l2 10L9.500 11l3 9 2-11" fill="none" stroke="#fff" stroke-width="2"/></svg></div>
    <div class="ms-auto d-flex align-items-center" style="margin-right:12px;color:#fff">
      <svg width="14" height="36"><path d="M2 3v30M5.500 3v30M9 3v30" stroke="#14304c" stroke-width="2" stroke-dasharray="2 2"/></svg>
      <svg width="16" height="14" style="margin:-3px 0 0 4px"><text x="1" y="11" fill="#fff" font-family="Liberation Mono" font-size="12" textLength="13">CH</text></svg>
      <svg style="margin:-5px 0 0 5px" width="62" height="24"><rect x=".5" y="4.500" width="15" height="15" fill="#fff" stroke="#777"/><circle cx="8" cy="11.500" r="4.200" fill="none" stroke="#000" stroke-width="2"/><path d="M9 13l4 4" stroke="#000" stroke-width="2"/><path d="M22.500 1h15v22h-15zM42.500 1h15v22h-15z" fill="#88a6bf" stroke="#fff"/><path d="M24 5h6v14h-6z" fill="#bbb"/><path d="M45 7h5v5h-5z" fill="#fff"/><path d="M54 13v4l-2 2" stroke="#fff" stroke-width="1.500" fill="none"/></svg>
      <svg style="margin-left:13px" width="21" height="20"><g fill="none" stroke="#fff" stroke-width="2"><path d="M2 8q8.500-9 17 0M5 11.500q5.500-6 11 0M7.500 14.500q3-3 6 0"/></g><circle cx="10.500" cy="16.500" r="2" fill="#fff"/></svg>
      <svg style="margin-left:9px" width="10" height="8"><path d="M1 6l4-4 4 4z" fill="#fff"/></svg>
      <svg style="margin-left:10px" width="18" height="18"><path d="M2 8Q3 1 9 1t6 7l2 6H1z" fill="#111"/><ellipse cx="8.500" cy="12" rx="5" ry="4.500" fill="#fff"/><path d="M3 8q6 3 11-1v3q-6 3-11 1z" fill="#e21b65"/><path d="M11 1l5 4V0z" fill="#f52a8f"/><circle cx="7" cy="5" r="1.500" fill="#fff"/><circle cx="10.500" cy="5" r="1.500" fill="#fff"/><path d="M2 16h6v2H2zM10 16h6v2h-6z" fill="#f5b01c"/></svg>
      <svg style="margin-left:7px" width="18" height="18"><circle cx="9" cy="9" r="8" fill="#f7d91d"/><path d="M2 6q5-7 11-4 0 6-9 13z" fill="#84c72e"/><path d="M9 5v8M5 9h8" stroke="#164a22" stroke-width="2.200"/></svg>
      <svg style="margin-left:7px" width="64" height="18"><g fill="none" stroke="#fff" stroke-width="1.500"><path d="M3 2v4M6 2v4M1 6h7v3q-1 2-3.500 2T1 9zM4.500 11v5M9.500 3.500h6v12h-6zM11 2h3M37 5q3 4 0 8M34.500 7q1 2 0 4M52 4.500h11v8H52M57 13v3M53 16h8M50 6v9h4M47.500 2h5v4h-5z"/><path d="M25 6.500h3l4-4v13l-4-4h-3z" fill="#fff" stroke="none"/></g></svg>
      <div class="clock" style="margin:0 0 0 9px;width:110px">下午 23:10<br>2015/10/17 星期六</div>
    </div>
  </div>
  <span class="gh position-absolute" style="left:356px">字</span><span class="gh position-absolute" style="left:421px">中文(中国)</span>
  <svg class="position-absolute" style="left:1286px;top:9px;opacity:.45" width="80" height="16"><path d="M2 3h5v9H2zM8 3h5v9H8zM40 2h12v12H40zM42 5h8M42 8h8M42 11h8M79 2h-6v12h6" fill="none" stroke="#dbe8f0"/></svg>
</div>

<script src="https://cdn.jsdelivr.net/npm/bootstrap@5.3.0/dist/js/bootstrap.bundle.min.js"></script>
<script>
const put = (id, html) => document.getElementById(id).insertAdjacentHTML('beforeend', html);
const svg = (id, s = 16) => `<svg width="${s}" height="${s}"><use href="#${id}"/></svg>`;

put('side', '<div class="d-flex align-items-center" style="height:34px;color:#000;font-weight:600;padding:4px 0 0 10px"><svg width="15" height="14" style="margin-right:5px"><path d="M4 1h7v5h3.500l-7 6.500L.5 6H4z" fill="#fff" stroke="#57a"/></svg>内容管理</div>' +
  ['栏目管理','文章模型','图文模型','问答模型','下载模型','招聘模型','留言管理','应聘管理','推荐位设置','模型管理']
  .map((t, i) => `<div class="d-flex align-items-center${i === 1 ? ' sel' : ''}" style="padding-left:15px;gap:7px">${svg('arr', 8)}${t}</div>`).join(''));

const real = [363,1228,920,649,1944,1007,965,795,637,656,335,580,591,769];
const titles = ['学','新','新','学','发','发','发','制','制','制','制','学','学','学'];
put('grid', real.map((r, i) => `<div class="g-row d-flex align-items-center"><div class="g-check"><div class="cbx"></div></div><div class="g-ord"><div class="numbox">999</div></div><div class="g-id">${62 - i}</div><div class="g-title"><span style="color:#b80">[</span>${titles[i]}</div><div class="g-real">${r}</div><div class="g-stat">启用</div><div class="d-flex" style="gap:5px;padding-left:5px">${svg('pencil')}${svg('cross')}</div></div>`).join(''));

put('opts', ['副教授','讲师','承担项目','发表论文','获奖情况','专利软件','制定标准','举办会议','学术报告','外出交流','引智计划','硕士生培养','博士生培养','第二批','第一批','第十批','第九批','新闻动态','通知公告','人才招聘'].map(t => `<div>${t}</div>`).join(''));

const ico = n => n === '|' ? '<i class="sep"></i>' : `<span class="ico">${svg('e-' + n)}</span>`;
put('bar1', 'preview print tpl code cut copy paste pastet pastew | left center right full ol ul ind out sub sup broom wand select | fs'.split(' ').map(ico).join(''));
const drop = '<svg width="5" height="3"><path d="M0 0h5L2.500 3z" fill="#777"/></svg>';
const bold = (t, css) => `<span class="ico" style="font:bold 14px 'Liberation Serif',serif;${css}">${t}</span>`;
put('bar2', `<span style="width:5px">${drop}</span>` + ico('|') +
  `<span class="d-flex align-items-center justify-content-center" style="width:29px;gap:2px;font:14px 'Liberation Sans',sans-serif;color:#2f6fe0">A${drop}</span>` +
  `<span class="d-flex align-items-center" style="width:30px;gap:2px;padding-left:3px;font:14px 'Liberation Sans',sans-serif"><b style="background:#ffcb00;width:15px;line-height:15px;border-radius:2px;text-align:center;font-weight:400">A</b>${drop}</span>` +
  bold('B', '-webkit-text-stroke:.5px #000') + bold('I', 'font-style:italic') + bold('U', 'text-decoration:underline') + bold('ABC', 'font-size:8px;font-weight:400;text-decoration:line-through') +
  'lh eraser | img imgs flash video attach table hr smile map pb anchor link unlink | help'.split(' ').map(ico).join(''));
</script>
</body>
</html>
